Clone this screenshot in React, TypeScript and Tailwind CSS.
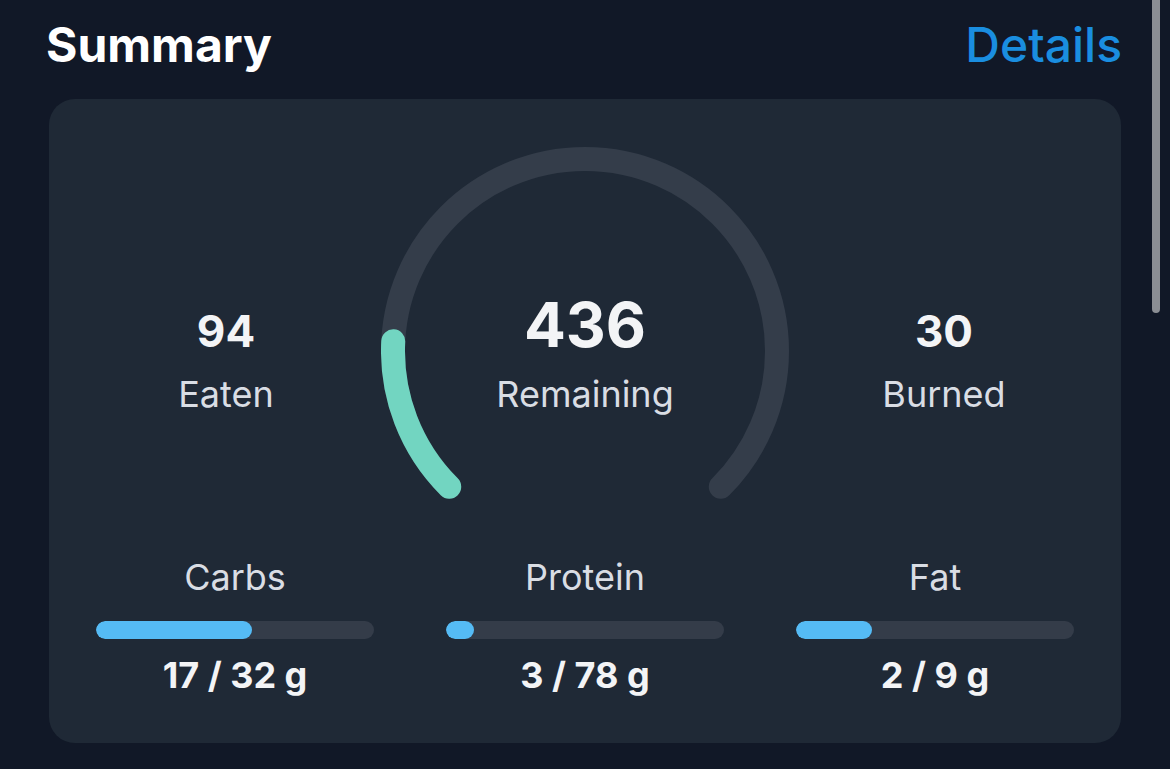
import React from "react";

type Macro = { name: string; eaten: number; goal: number };

const macros: Macro[] = [
  { name: "Carbs", eaten: 17, goal: 32 },
  { name: "Protein", eaten: 3, goal: 78 },
  { name: "Fat", eaten: 2, goal: 9 },
];

const eaten = 94;
const burned = 30;
const remaining = 436;

// 270° dial: opens at the bottom, runs clockwise from bottom-left to bottom-right.
function Dial({ ratio }: { ratio: number }) {
  const r = 192;
  const c = 204;
  const a0 = (135 * Math.PI) / 180;
  const a1 = (45 * Math.PI) / 180;
  const x0 = c + r * Math.cos(a0);
  const y0 = c + r * Math.sin(a0);
  const x1 = c + r * Math.cos(a1);
  const y1 = c + r * Math.sin(a1);
  const d = `M ${x0} ${y0} A ${r} ${r} 0 1 1 ${x1} ${y1}`;
  return (
    <svg width={408} height={360} viewBox="0 0 408 360" className="block">
      <path d={d} fill="none" stroke="#343d4a" strokeWidth={24} strokeLinecap="round" />
      <path
        d={d}
        fill="none"
        stroke="#72d5c1"
        strokeWidth={24}
        strokeLinecap="round"
        pathLength={100}
        strokeDasharray={`${ratio * 100} 200`}
      />
    </svg>
  );
}

function SideStat({ value, label }: { value: number; label: string }) {
  return (
    <div className="w-[200px] mt-[162px] flex flex-col items-center">
      <div className="text-[44px] leading-none font-bold text-[#f3f4f6]">{value}</div>
      <div className="mt-[23px] text-[36px] leading-none text-[#d9dde4]">{label}</div>
    </div>
  );
}

function MacroBar({ m }: { m: Macro }) {
  const pct = Math.min(1, m.eaten / m.goal);
  return (
    <div className="flex flex-col items-center">
      <div className="text-[36px] leading-none text-[#d9dde4]">{m.name}</div>
      <div className="mt-[26px] h-[18px] w-full rounded-full bg-[#343c49] overflow-hidden">
        <div
          className="h-full rounded-full bg-[#55bbf5]"
          style={{ width: `calc(18px + ${pct} * (100% - 18px))` }}
        />
      </div>
      <div className="mt-[18px] text-[36px] leading-none font-bold text-[#f3f4f6]">
        {m.eaten} / {m.goal} g
      </div>
    </div>
  );
}

export default function App() {
  return (
    <div className="relative w-full h-[769px] overflow-hidden bg-[#111827] font-['Inter',sans-serif]">
      <div className="flex items-start justify-between pl-[46px] pr-[48px] pt-[21px]">
        <h2 className="text-[48px] leading-none font-bold text-white">Summary</h2>
        <span className="text-[48px] leading-none font-medium text-[#1a8ee0]">Details</span>
      </div>

      <div className="mx-[49px] mt-[30px] rounded-[26px] bg-[#1f2936] pt-[48px] px-[47px] pb-[50px]">
        <div className="flex items-start justify-center gap-[55px]">
          <SideStat value={eaten} label="Eaten" />
          <div className="relative">
            <Dial ratio={eaten / (eaten + remaining)} />
            <div className="absolute inset-x-0 top-[147px] flex flex-col items-center">
              <div className="text-[62px] leading-none font-bold text-[#f3f4f6]">{remaining}</div>
              <div className="mt-[20px] text-[36px] leading-none text-[#d9dde4]">Remaining</div>
            </div>
          </div>
          <SideStat value={burned} label="Burned" />
        </div>

        <div className="mt-[52px] grid grid-cols-3 gap-[72px]">
          {macros.map((m) => (
            <MacroBar key={m.name} m={m} />
          ))}
        </div>
      </div>

      {/* overlay scrollbar thumb */}
      <div className="absolute right-[10px] top-[-10px] h-[323px] w-[8px] rounded-full bg-[#8b8e94]" />
    </div>
  );
}
